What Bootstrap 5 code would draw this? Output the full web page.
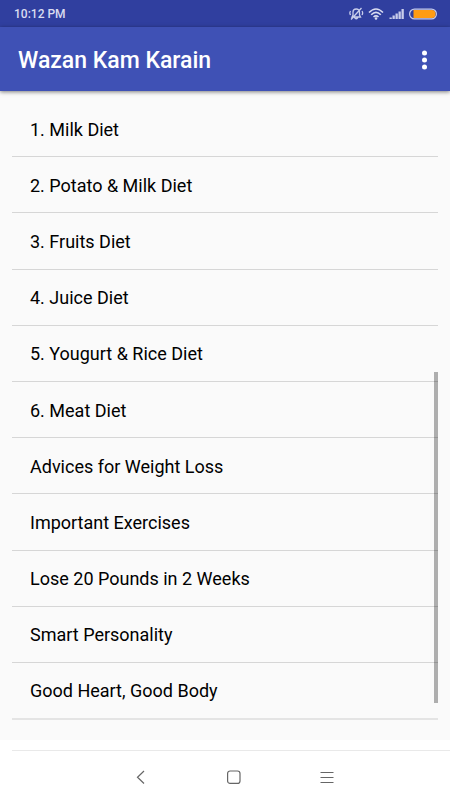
<!DOCTYPE html>
<html lang="en">
<head>
<meta charset="utf-8">
<meta name="viewport" content="width=device-width, initial-scale=1">
<title>Wazan Kam Karain</title>
<link href="https://cdn.jsdelivr.net/npm/bootstrap@5.3.0/dist/css/bootstrap.min.css" rel="stylesheet">
<style>
body { font-family: Roboto, "Liberation Sans", sans-serif; background: #fafafa; color: #000; }
.status-bar { background: #303f9f; color: #d9dcf0; height: 27px; padding: 1px 13px 0 14px; font-size: 12px; line-height: 16px; font-weight: 500; }
.app-bar { background: #3f51b5; height: 64px; padding: 4px 12px 0 18px; box-shadow: 0 1px 4px rgba(0,0,0,.5); z-index: 1; }
.app-title { font-size: 23px; line-height: 32px; font-weight: 500; color: #fff; }
.menu-btn { line-height: 0; }
.diet-area { padding: 10px 12px 20px; }
.diet-list { --bs-list-group-bg: transparent; --bs-list-group-color: #000; --bs-list-group-border-color: #d6d6d6; --bs-list-group-item-padding-x: 18px; --bs-list-group-item-padding-y: 12px; font-size: 18px; line-height: 24px; }
.diet-list .list-group-item { border-width: 0 0 1px; padding-top: 14px; }
.diet-list .list-group-item:last-child { border-bottom: 2px solid #e4e4e4; }
.scroll-thumb { position: absolute; right: 12px; top: 281px; bottom: 37px; width: 4px; background: #000; opacity: .3; }
.nav-area { background: #fff; padding: 10px 0 0 12px; }
.nav-row { border-top: 1px solid #e9e9e9; height: 50px; padding: 3px 113px 0 118px; }
.nav-row .btn { line-height: 0; }
</style>
</head>
<body class="d-flex flex-column min-vh-100">
<div class="status-bar d-flex align-items-center justify-content-between">
  <span>10:12 PM</span>
  <div class="d-flex align-items-center">
    <svg class="me-1" width="16" height="14" viewBox="0 0 16 14" fill="none" stroke="#c8cdeb" stroke-width="1.300" aria-label="Muted"><path d="M4 10H12.500L11.500 8V5Q11.300 2 8.200 2T5 5V8zM6.500 10.500Q8 13 9.800 10.500M3 12.500 13.500 1M2.500 4Q1.200 6 2.500 8M14 4Q15.300 6 14 8"/></svg>
    <svg width="16" height="14" viewBox="0 0 16 14" fill="none" stroke="#d9dcf0" stroke-width="1.600" aria-label="Wi-Fi"><path d="M1 5.500Q8-1.500 15 5.500M3.200 7.800Q8 3 12.800 7.800M5.500 10Q8 7.800 10.500 10"/><circle cx="8" cy="11.500" r="1.300" fill="#d9dcf0" stroke="none"/></svg>
    <svg class="ms-1" width="17" height="14" viewBox="0 0 17 14" fill="#c8cdeb" aria-label="Signal"><path d="M1.500 10.500h2.300V12H1.500zM4.500 8.500h2.300V12H4.500zM7.500 6.500h2.300V12H7.500zM10.500 4.500h2.300V12h-2.300zM13.500 2h2.300v10h-2.300z"/></svg>
    <svg class="ms-1" width="28" height="14" viewBox="0 0 28 14" aria-label="Battery"><rect x=".6" y="2.100" width="26.800" height="9.800" rx="4.900" fill="none" stroke="#c8cdeb" stroke-width="1.200"/><path d="M4.500 3H23Q26.500 3 26.500 7T23 11H4.500z" fill="#ff9c14"/></svg>
  </div>
</div>
<header class="app-bar d-flex align-items-center justify-content-between position-relative">
  <h1 class="app-title m-0">Wazan Kam Karain</h1>
  <button class="btn menu-btn border-0 p-1" type="button" aria-label="More options">
    <svg width="19" height="22" viewBox="0 0 19 22" fill="#fff"><circle cx="9.500" cy="3" r="2.500"/><circle cx="9.500" cy="10" r="2.500"/><circle cx="9.500" cy="17" r="2.500"/></svg>
  </button>
</header>
<main class="diet-area position-relative d-flex flex-column flex-fill">
  <div class="list-group list-group-flush diet-list flex-fill">
    <a href="#" class="list-group-item d-flex align-items-center flex-fill">1. Milk Diet</a>
    <a href="#" class="list-group-item d-flex align-items-center flex-fill">2. Potato &amp; Milk Diet</a>
    <a href="#" class="list-group-item d-flex align-items-center flex-fill">3. Fruits Diet</a>
    <a href="#" class="list-group-item d-flex align-items-center flex-fill">4. Juice Diet</a>
    <a href="#" class="list-group-item d-flex align-items-center flex-fill">5. Yougurt &amp; Rice Diet</a>
    <a href="#" class="list-group-item d-flex align-items-center flex-fill">6. Meat Diet</a>
    <a href="#" class="list-group-item d-flex align-items-center flex-fill">Advices for Weight Loss</a>
    <a href="#" class="list-group-item d-flex align-items-center flex-fill">Important Exercises</a>
    <a href="#" class="list-group-item d-flex align-items-center flex-fill">Lose 20 Pounds in 2 Weeks</a>
    <a href="#" class="list-group-item d-flex align-items-center flex-fill">Smart Personality</a>
    <a href="#" class="list-group-item d-flex align-items-center flex-fill">Good Heart, Good Body</a>
  </div>
  <div class="scroll-thumb"></div>
</main>
<nav class="nav-area" aria-label="System">
  <div class="nav-row d-flex align-items-center justify-content-between">
    <button class="btn border-0 p-0" type="button" aria-label="Back"><svg width="20" height="20" viewBox="0 0 20 20" fill="none" stroke="#666" stroke-width="1.200"><path d="M14 4 7.500 10.200 14 16.500"/></svg></button>
    <button class="btn border-0 p-0" type="button" aria-label="Home"><svg width="20" height="20" viewBox="0 0 20 20" fill="none" stroke="#666" stroke-width="1.200"><rect x="3.600" y="4" width="12.400" height="12.400" rx="2.500"/></svg></button>
    <button class="btn border-0 p-0" type="button" aria-label="Recent apps"><svg width="20" height="20" viewBox="0 0 20 20" stroke="#666" stroke-width="1"><path d="M3.500 5.500h13M3.500 10.500h13M3.500 15.500h13"/></svg></button>
  </div>
</nav>
<script src="https://cdn.jsdelivr.net/npm/bootstrap@5.3.0/dist/js/bootstrap.bundle.min.js"></script>
</body>
</html>
